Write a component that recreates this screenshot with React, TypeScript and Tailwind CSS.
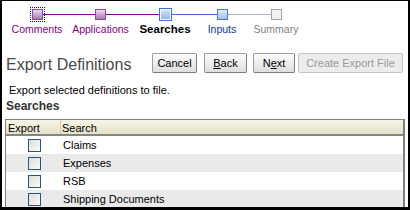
import clsx from "clsx";

// ─── Train ────────────────────────────────────────────────────

type StopState = "visited" | "current" | "next" | "disabled";

interface Step {
  label: string;
  width: string;
  state: StopState;
  left: string;
  right: string;
  focus?: boolean;
}

const STEPS: Step[] = [
  { label: "Comments",     width: "w-[60px]", state: "visited",  left: "bg-transparent", right: "bg-[#800080]", focus: true },
  { label: "Applications", width: "w-[67px]", state: "visited",  left: "bg-[#800080]",   right: "bg-[#800080]" },
  { label: "Searches",     width: "w-[62px]", state: "current",  left: "bg-[#800080]",   right: "bg-[#3a6fd8]" },
  { label: "Inputs",       width: "w-[52px]", state: "next",     left: "bg-[#3a6fd8]",   right: "bg-[#a9b5c9]" },
  { label: "Summary",      width: "w-[56px]", state: "disabled", left: "bg-[#a9b5c9]",   right: "bg-transparent" },
];

function Stop({ state, focus }: { state: StopState; focus?: boolean }) {
  if (state === "current") {
    return (
      <div className="w-[13px] h-[13px] shrink-0 border border-[#3a6fd8] bg-white p-px">
        <div className="w-full h-full bg-linear-to-b from-[#d4e4fa] to-[#93b5ea]" />
      </div>
    );
  }
  return (
    <div
      className={clsx(
        "w-[11px] h-[11px] shrink-0 border",
        state === "visited"  && "border-[#8c4c9c] bg-linear-to-b from-[#ecdcf0] to-[#a47cb4]",
        state === "next"     && "border-[#4a7bd4] bg-linear-to-b from-[#e0ecfa] to-[#a3c0ec]",
        state === "disabled" && "border-[#a4a4a4] bg-[#f0f3f6]",
        focus && "outline outline-1 outline-dotted outline-[#0000ff] outline-offset-1"
      )}
    />
  );
}

function Train() {
  return (
    <div className="flex pl-[5px] pt-[5px]">
      {STEPS.map((s) => (
        <div key={s.label} className={clsx("flex flex-col items-center", s.width)}>
          <div className="flex h-[16px] w-full items-center">
            <div className={clsx("h-px flex-1", s.left)} />
            <Stop state={s.state} focus={s.focus} />
            <div className={clsx("h-px flex-1", s.right)} />
          </div>
          <span
            className={clsx(
              "mt-px whitespace-nowrap leading-[12px]",
              s.state === "visited"  && "text-[10.5px] text-[#800080]",
              s.state === "current"  && "text-[11.5px] font-bold text-black",
              s.state === "next"     && "text-[10.5px] text-[#0a3a9c]",
              s.state === "disabled" && "text-[10.5px] text-[#808080]"
            )}
          >
            {s.label}
          </span>
        </div>
      ))}
    </div>
  );
}

// ─── Buttons ──────────────────────────────────────────────────

function Button({ width, disabled, children }: { width: string; disabled?: boolean; children: React.ReactNode }) {
  return (
    <button
      className={clsx(
        "h-[20px] flex items-center justify-center rounded-[2px] border text-[11px] leading-none",
        width,
        disabled
          ? "border-[#c4c4c4] bg-[#ececec] text-[#9a9a9a]"
          : "border-[#9c9c9c] border-b-[#7c7c7c] border-r-[#7c7c7c] bg-linear-to-b from-[#fdfdfd] to-[#dedede] text-black"
      )}
    >
      {children}
    </button>
  );
}

// ─── Table ────────────────────────────────────────────────────

const SEARCHES = ["Claims", "Expenses", "RSB", "Shipping Documents"];

export default function App() {
  return (
    <div className="w-[410px] h-[210px] overflow-hidden bg-white border-black border-t border-x-2 border-b-[3px] font-['Liberation_Sans',Arial,sans-serif] text-[11px] text-black">
      <Train />

      {/* ── Header ── */}
      <div className="mt-[18px] flex items-start pl-[4px] pr-[5px]">
        <h1 className="pt-[2px] text-[16px] leading-[20px] text-[#4a4a4a]">Export Definitions</h1>
        <div className="ml-auto flex">
          <Button width="w-[45px]">Cancel</Button>
          <Button width="w-[43px] ml-[7px]"><span><u>B</u>ack</span></Button>
          <Button width="w-[42px] ml-[6px]"><span>N<u>e</u>xt</span></Button>
          <Button width="w-[105px] ml-[3px]" disabled>Create Export File</Button>
        </div>
      </div>

      <p className="mt-[9px] pl-[7px] leading-[13px]">Export selected definitions to file.</p>

      <h2 className="mt-[2px] pl-[4px] text-[12px] font-bold leading-[14px] text-[#333]">Searches</h2>

      {/* ── Table ── */}
      <div className="mx-[3px] mt-[6px] border-t border-l border-r-2 border-[#7f7f7f]">
        <div className="flex h-[16px] border-b-2 border-[#858585] bg-linear-to-b from-[#f7f5e6] to-[#e4e1c9] leading-[14px]">
          <div className="w-[55px] border-r border-[#cfccb8] pl-[2px] pt-px">Export</div>
          <div className="pl-[1px] pt-px">Search</div>
        </div>
        {SEARCHES.map((name, i) => (
          <div key={name} className={clsx("flex h-[18px] items-center", i % 2 === 1 ? "bg-[#eaeaea]" : "bg-white")}>
            <div className="flex w-[56px] justify-center">
              <div className="h-[13px] w-[13px] border border-[#2a5580] bg-linear-to-br from-[#dcdcd6] to-[#fbfbfb]" />
            </div>
            <span className="pl-[1px]">{name}</span>
          </div>
        ))}
      </div>
    </div>
  );
}
